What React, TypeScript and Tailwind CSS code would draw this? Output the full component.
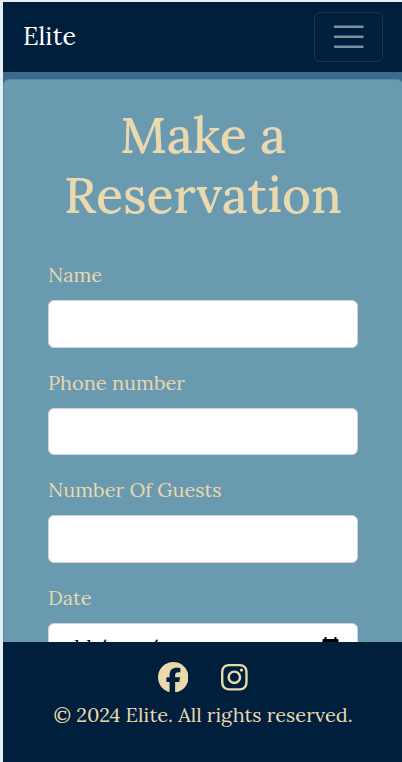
import { FaFacebook, FaInstagram } from "react-icons/fa6";

function Field({ label, date }: { label: string; date?: boolean }) {
  return (
    <div className="mb-5">
      <label className="mb-[10px] block h-[30px] whitespace-nowrap text-[20px] leading-[30px]">{label}</label>
      <div className="flex h-[47.5px] w-[310px] items-center justify-between rounded-[6px] border border-[#ced4da] bg-white pr-[18px] pl-[19px] text-black">
        {date && (
          <>
            <span className="flex pt-[2px] whitespace-nowrap text-[20px]">
              <span>dd</span>
              <span className="pl-px">/</span>
              <span className="px-px">mm</span>
              <span>/</span>
              <span className="px-px">yyyy</span>
            </span>
            <svg className="h-5 w-[17px]" viewBox="0 0 17 20" fill="none" stroke="currentColor">
              <path d="M1.5 4h14v14h-14z" strokeWidth="2" strokeLinejoin="round" />
              <path d="M1 5h15" strokeWidth="3" />
              <path d="M3.5 1v4M13.5 1v4" strokeWidth="2" />
            </svg>
          </>
        )}
      </div>
    </div>
  );
}

export default function App() {
  return (
    <div className="flex h-[762px] w-[402px] flex-col overflow-hidden bg-[#e6edf4] pt-[2px] pl-[3px] font-['Lora','Liberation_Serif',serif] text-[#ead8ae]">
      <header className="flex h-[70px] shrink-0 items-center justify-between bg-[#001f3d] pr-[19px] pl-5">
        <span className="pb-[2px] text-[25px] leading-none text-white">Elite</span>
        <button className="flex h-[50px] w-[69px] items-center justify-center rounded-[6px] border border-[#1a3550]" aria-label="Menu">
          <svg className="h-[37.5px] w-[37.5px]" viewBox="0 0 30 30" stroke="#808f9e" strokeWidth="2" strokeLinecap="round">
            <path d="M4 7h22M4 15h22M4 23h22" />
          </svg>
        </button>
      </header>
      <main className="min-h-0 flex-1 overflow-hidden bg-[#3b6b8b] pt-[7px]">
        <div className="h-[700px] w-[400px] rounded-[6px] border border-[#5c8ba3] bg-[#6a9ab0] px-11 pt-[25px]">
          <h1 className="mb-[35px] text-center text-[50px] leading-[60px] font-medium">
            Make a Reservation
          </h1>
          <Field label="Name" />
          <Field label="Phone number" />
          <Field label="Number Of Guests" />
          <Field label="Date" date />
        </div>
      </main>
      <footer className="flex h-[120px] shrink-0 flex-col items-center bg-[#001f3d] pt-[19px] pl-px">
        <div className="flex h-8 items-center gap-[33px]">
          <FaFacebook className="h-[30.5px] w-[30.5px]" />
          <FaInstagram className="h-[30.5px] w-[26.7px]" />
        </div>
        <p className="mt-[7px] whitespace-nowrap text-[20px] leading-[30px]">© 2024 Elite. All rights reserved.</p>
      </footer>
    </div>
  );
}
